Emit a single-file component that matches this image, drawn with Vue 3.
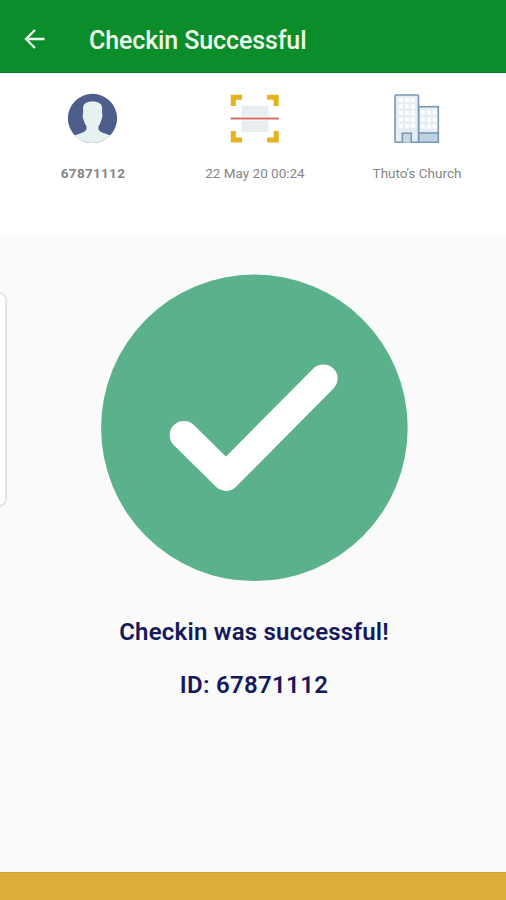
<script setup>
import {ref} from 'vue'

const checkin = ref({
    id: '67871112',
    date: '22 May 20 00:24',
    place: "Thuto's Church"
})

const goBack = () => {
    window.history.back()
}

const windowRows = [6.5, 13, 19.5, 26, 32.5]
</script>

<template>
    <div class="screen">
        <header class="toolbar">
            <button class="back" aria-label="Back" v-on:click="goBack">
                <svg width="22" height="22" viewBox="0 0 22 22">
                    <path d="M20.5 11H2.5M11 2L2 11L11 20" fill="none" stroke="#effbea" stroke-width="2.3"/>
                </svg>
            </button>
            <h1 class="title">Checkin Successful</h1>
        </header>

        <section class="details">
            <div class="detail">
                <svg class="icon" viewBox="0.5 -0.4 50 50">
                    <circle cx="25" cy="25" r="24.6" fill="#4d5d8c"/>
                    <path d="M15.6 20V15C15.6 10 19 8 25 8S34.6 10 34.6 15V20C35.2 22 34.8 25 33.6 27C33 29.5 32.2 31.2 31 32.5V36C32.5 39 38.5 40 42.8 42A24.6 24.6 0 0 1 7.2 42C11.5 40 17.5 39 19 36V32.5C17.8 31.2 17 29.5 16.4 27C15.2 25 14.8 22 15.6 20Z" fill="#e8f1f2"/>
                </svg>
                <p class="label bold">{{ checkin.id }}</p>
            </div>
            <div class="detail">
                <svg class="icon" viewBox="0.4 -0.6 50 50">
                    <rect x="12" y="12" width="27" height="26.5" fill="#e8eeef"/>
                    <path d="M3.7 12.5V3.7H12.5M37.5 3.7H46.6V12.5M3.7 37.5V46.3H12.5M37.5 46.3H46.6V37.5" fill="none" stroke="#e7b21f" stroke-width="5"/>
                    <path d="M1 24.9H49.3" stroke="#fff" stroke-width="4"/>
                    <path d="M1 24.9H49.3" stroke="#dc6f6b" stroke-width="2"/>
                </svg>
                <p class="label date">{{ checkin.date }}</p>
            </div>
            <div class="detail">
                <svg class="icon" viewBox="0 -0.5 50 50">
                    <g stroke="#7798b4" stroke-width="1.6">
                        <rect x="26.5" y="13.2" width="19.8" height="35.6" fill="#e6edf4"/>
                        <rect x="26.5" y="39.5" width="19.8" height="9.3" fill="#bdd2e3"/>
                        <rect x="3" y="1.5" width="23.5" height="47.3" rx="1" fill="#e6edf4"/>
                        <path d="M10.3 49V39.8H19.3V49" fill="#c6d8e6"/>
                    </g>
                    <g fill="none" stroke="#fff" stroke-width="3.8" stroke-dasharray="4 2">
                        <path v-for="y in windowRows" v-bind:key="y" v-bind:d="'M6.8 ' + y + 'H22.8'"/>
                        <path d="M28.8 19H44.8M28.8 26H44.8M28.8 33H44.8"/>
                    </g>
                </svg>
                <p class="label">{{ checkin.place }}</p>
            </div>
        </section>

        <main class="content">
            <svg class="success" viewBox="0 0 308 308">
                <circle cx="154.4" cy="153.8" r="153.3" fill="#5bb18c"/>
                <path d="M83.9 161.1L126 202.7L223.4 104.6" fill="none" stroke="#fff" stroke-width="28.4" stroke-linecap="round" stroke-linejoin="round"/>
            </svg>
            <p class="message">Checkin was successful!</p>
            <p class="message id">ID: {{ checkin.id }}</p>
            <div class="handle"></div>
        </main>

        <footer class="bottom"></footer>
    </div>
</template>

<style>
body {
    margin: 0;
    background: #fafafa;
}
</style>

<style scoped>
.screen {
    display: flex;
    flex-direction: column;
    width: 506px;
    height: 900px;
    overflow: hidden;
    background: #fafafa;
    font-family: Roboto, "Liberation Sans", sans-serif;
}

.toolbar {
    box-sizing: border-box;
    display: flex;
    align-items: center;
    height: 73px;
    padding: 6px 0 0 24px;
    background: #0c8d2c;
    border-bottom: 1px solid #08801f;
}

.back {
    display: block;
    width: 22px;
    height: 22px;
    margin-top: -1px;
    padding: 0;
    border: none;
    background: none;
}

.back svg {
    display: block;
}

.title {
    margin: 4px 0 0 43px;
    font-size: 25px;
    line-height: 30px;
    font-weight: 500;
    letter-spacing: -0.12px;
    color: #effbea;
    white-space: nowrap;
}

.details {
    box-sizing: border-box;
    display: grid;
    grid-template-columns: repeat(3, 162px);
    height: 162px;
    padding: 20px 0 0 12px;
    background: #fff;
}

.detail {
    display: flex;
    flex-direction: column;
    align-items: center;
}

.icon {
    width: 50px;
    height: 50px;
}

.label {
    margin: 21px 0 0;
    font-size: 13.5px;
    line-height: 18px;
    color: #858585;
    white-space: nowrap;
}

.bold {
    font-weight: 700;
    letter-spacing: 0.3px;
}

.content {
    position: relative;
    flex: 1;
    display: flex;
    flex-direction: column;
    align-items: center;
    padding-left: 2px;
}

.success {
    width: 308px;
    height: 308px;
    margin-top: 39px;
}

.message {
    margin: 34px 0 0;
    font-size: 24px;
    line-height: 32px;
    font-weight: 600;
    letter-spacing: 0.22px;
    color: #14195c;
    white-space: nowrap;
}

.id {
    margin-top: 21px;
    letter-spacing: 0.3px;
}

/* edge panel handle, overlaps the left side of the screen */
.handle {
    box-sizing: border-box;
    position: absolute;
    left: -3px;
    top: 57px;
    width: 10px;
    height: 215px;
    border: 2px solid #e4e4e4;
    border-left: none;
    border-radius: 0 8px 8px 0;
    background: #fff;
}

.bottom {
    box-sizing: border-box;
    height: 28px;
    background: #dbaf39;
    border-top: 1px solid #cfa02c;
}
</style>
